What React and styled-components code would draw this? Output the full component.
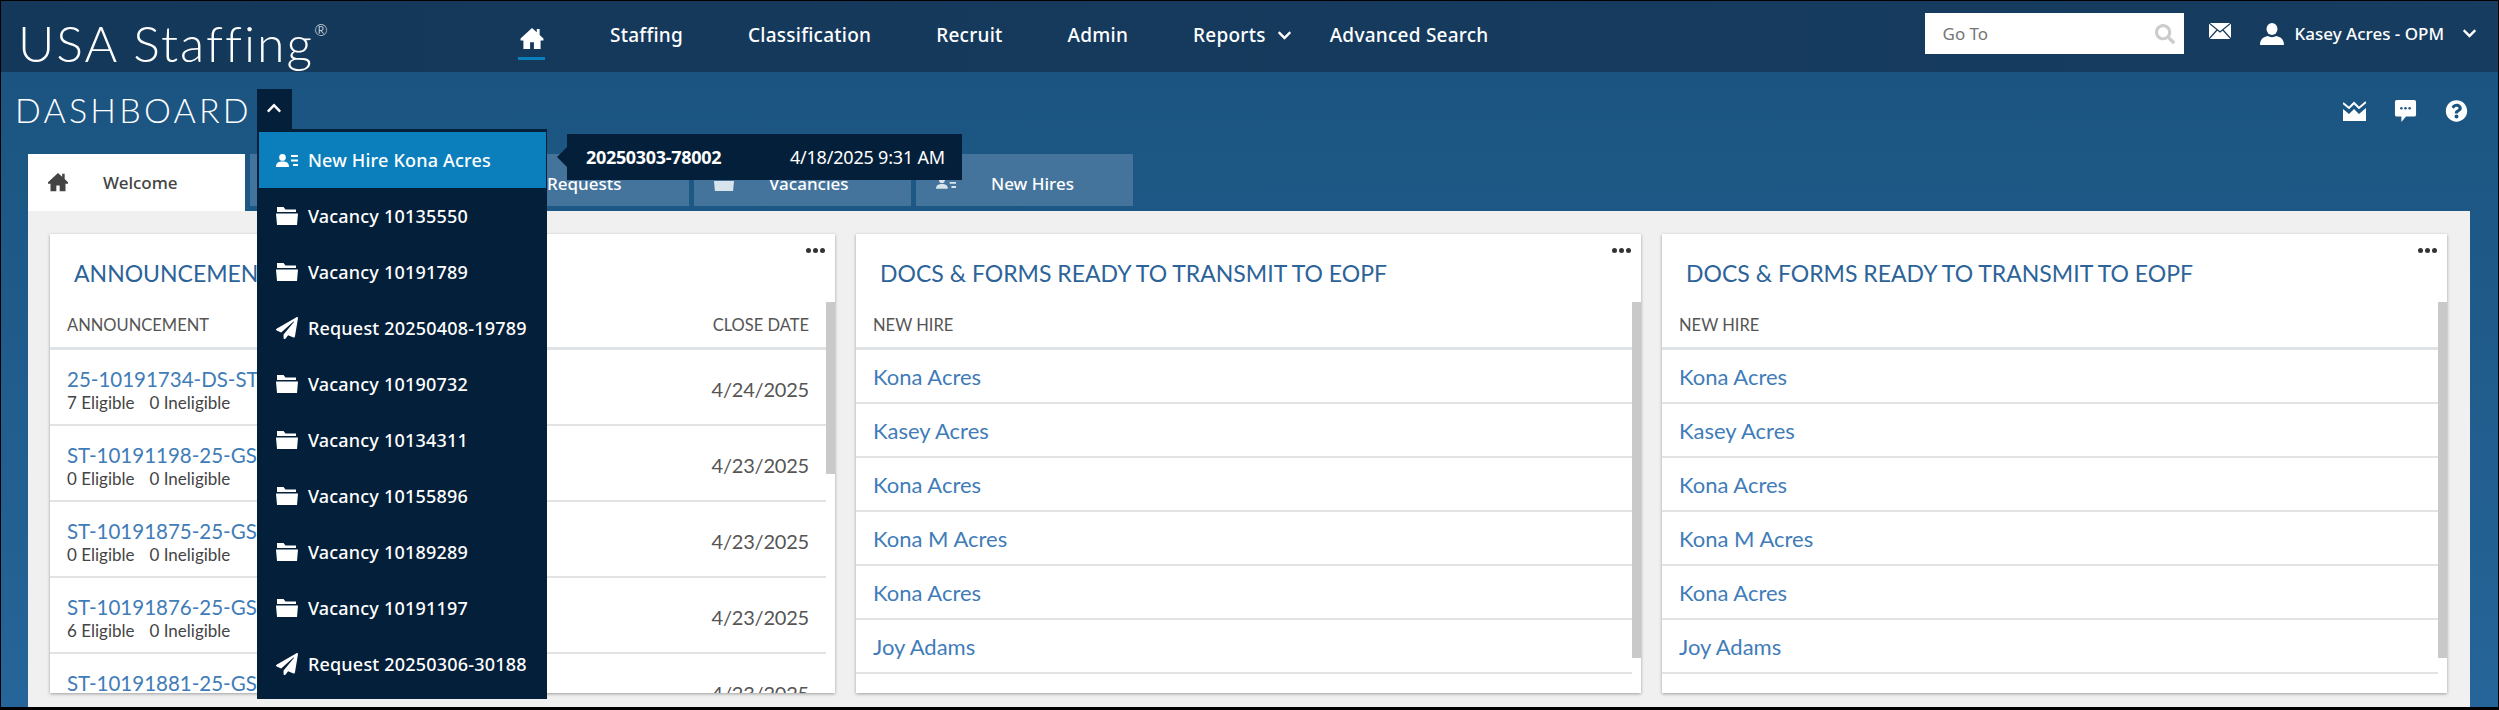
import React from "react";
import styled, { createGlobalStyle } from "styled-components";
import { FaChevronDown, FaChevronUp, FaPaperPlane, FaQuestionCircle, FaSearch } from "react-icons/fa";

const GlobalStyle = createGlobalStyle`
  html, body { margin: 0; padding: 0; background: #000; }
  * { box-sizing: border-box; }
`;

const Frame = styled.div`
  position: relative;
  width: 2499px;
  height: 710px;
  overflow: hidden;
  display: flex;
  flex-direction: column;
  padding: 1px 1px 3px 1px;
  background: #000;
  font-family: "Noto Sans", sans-serif;
`;

const Header = styled.header`
  height: 71px;
  flex: none;
  display: flex;
  align-items: flex-start;
  padding-left: 17px;
  background: linear-gradient(90deg, #14385a, #163c5f);
  color: #fff;
`;

const Logo = styled.div`
  width: 500px;
  margin-top: 12px;
  font-family: "Lato", sans-serif;
  font-weight: 300;
  font-size: 50px;
  line-height: 60px;
  letter-spacing: 2px;
  sup { font-size: 16px; line-height: 0; vertical-align: 26px; letter-spacing: 0; }
`;

const Nav = styled.nav`
  display: flex;
  align-items: flex-start;
  gap: 65px;
`;

const NavLink = styled.a`
  display: flex;
  align-items: center;
  gap: 11px;
  height: 24px;
  margin-top: 22px;
  margin-right: ${(p) => p.$tight || 0}px;
  font-size: 19px;
  font-weight: 500;
  letter-spacing: 0.25px;
  white-space: nowrap;
`;

const HomeLink = styled.a`
  width: 27px;
  height: 59px;
  padding-top: 27px;
  border-bottom: 3px solid #0a7fbc;
  display: flex;
  justify-content: center;
  svg { width: 24px; height: 21px; }
`;

const HeaderRight = styled.div`
  margin-left: auto;
  display: flex;
  align-items: flex-start;
  padding-right: 21px;
`;

const SearchBox = styled.div`
  width: 259px;
  height: 41px;
  margin-top: 12px;
  padding: 0 9px 0 18px;
  background: #fff;
  color: #757575;
  display: flex;
  align-items: center;
  justify-content: space-between;
  font-size: 17px;
  svg { color: #ccc; font-size: 20px; }
`;

const MailIcon = styled.svg`
  width: 22px;
  height: 16px;
  margin: 22px 29px 0 25px;
`;

const UserIcon = styled.svg`
  width: 24px;
  height: 22px;
  margin-top: 22px;
`;

const UserName = styled.span`
  margin: 21px 18px 0 11px;
  font-size: 17px;
  font-weight: 500;
  line-height: 24px;
  white-space: nowrap;
`;

const UserCaret = styled.span`
  margin-top: 25px;
  font-size: 15px;
  line-height: 15px;
`;

const Body = styled.main`
  flex: 1;
  min-height: 0;
  display: flex;
  flex-direction: column;
  padding: 0 28px 0 27px;
  background: linear-gradient(180deg, #1b5480, #266599);
`;

const TitleRow = styled.div`
  height: 82px;
  flex: none;
  display: flex;
  align-items: flex-start;
  margin-left: -27px;
  padding-left: 14px;
`;

const PageTitle = styled.h1`
  margin: 17px 5px 0 0;
  color: #fff;
  font-family: "Lato", sans-serif;
  font-weight: 300;
  font-size: 34px;
  line-height: 42px;
  letter-spacing: 3.2px;
`;

const Toggle = styled.div`
  position: relative;
  z-index: 5;
  width: 35px;
  height: 41px;
  margin-top: 17px;
  padding-top: 11px;
  display: flex;
  justify-content: center;
  align-items: flex-start;
  background: #041f3a;
  color: #fff;
  font-size: 16px;
`;

const Menu = styled.ul`
  position: absolute;
  top: 40px;
  left: 0;
  width: 290px;
  height: 570px;
  margin: 0;
  padding: 3px 1px 0 2px;
  list-style: none;
  background: #041f3a;
`;

const MenuItem = styled.li`
  height: 56px;
  display: flex;
  align-items: center;
  padding-left: 17px;
  gap: 10px;
  background: ${(p) => (p.$active ? "#0a7fbc" : "transparent")};
  color: #fff;
  font-size: 18px;
  font-weight: 500;
  letter-spacing: 0.2px;
  text-align: left;
  white-space: nowrap;
  svg { width: 22px; height: auto; flex: none; }
`;

const Tooltip = styled.div`
  position: absolute;
  top: 45px;
  left: 310px;
  width: 395px;
  height: 46px;
  display: flex;
  align-items: center;
  justify-content: space-between;
  padding: 0 17px 0 19px;
  background: #041f3a;
  color: #fff;
  font-size: 18px;
  white-space: nowrap;
  &::before {
    content: "";
    position: absolute;
    left: -10px;
    top: 13px;
    border-style: solid;
    border-width: 10px 10px 10px 0;
    border-color: transparent #041f3a transparent transparent;
  }
  b { font-weight: 700; letter-spacing: -0.3px; }
  span { letter-spacing: -0.2px; }
`;

const TopIcons = styled.div`
  margin-left: auto;
  display: flex;
  align-items: center;
  gap: 28px;
  margin-top: 28px;
  margin-right: 2px;
  color: #fff;
  svg { width: 23px; height: 22px; display: block; }
`;

const Tabs = styled.div`
  height: 57px;
  flex: none;
  display: flex;
  align-items: flex-start;
  gap: 5px;
`;

const Tab = styled.div`
  width: 217px;
  height: ${(p) => (p.$active ? 57 : 52)}px;
  display: flex;
  align-items: center;
  padding: ${(p) => (p.$active ? "0 0 0 20px" : "6px 0 0 20px")};
  gap: 35px;
  background: ${(p) => (p.$active ? "#fff" : "#44739b")};
  color: ${(p) => (p.$active ? "#444" : "#fff")};
  font-size: 17px;
  font-weight: 500;
  svg { width: 20px; height: auto; flex: none; opacity: ${(p) => (p.$active ? 1 : 0.8)}; }
`;

const Panel = styled.section`
  flex: 1;
  min-height: 0;
  padding: 23px 22px 14px 22px;
  background: #f0f0f0;
  display: grid;
  grid-template-columns: repeat(3, 785px);
  grid-template-rows: minmax(0, 1fr);
  gap: 21px;
`;

const Card = styled.article`
  position: relative;
  overflow: hidden;
  background: #fff;
  box-shadow: 0 1px 3px rgba(0, 0, 0, 0.35);
`;

const CardMore = styled.span`
  position: absolute;
  top: 14px;
  right: 10px;
  display: flex;
  gap: 2px;
  i { width: 5px; height: 5px; border-radius: 50%; background: #333; }
`;

const CardTitle = styled.h2`
  height: 68px;
  margin: 0;
  padding: 24px 0 0 24px;
  color: #2c6399;
  font-family: "Lato", sans-serif;
  font-weight: 400;
  font-size: 23px;
  line-height: 30px;
  white-space: nowrap;
`;

const Scroll = styled.div`
  position: absolute;
  top: 68px;
  right: 0;
  width: 9px;
  height: ${(p) => p.$size}px;
  background: #c9c9c9;
`;

const TableHead = styled.div`
  height: 48px;
  margin-right: 9px;
  padding: 0 17px 0 17px;
  display: flex;
  align-items: center;
  justify-content: space-between;
  border-bottom: 3px solid #dfe3e6;
  color: #555;
  font-family: "Lato", sans-serif;
  font-size: 16.5px;
`;

const AnnouncementRow = styled.div`
  height: 76px;
  margin-right: 9px;
  padding: 0 17px 0 17px;
  display: flex;
  align-items: center;
  justify-content: space-between;
  border-bottom: 2px solid #e3e3e3;
  font-family: "Lato", sans-serif;
`;

const RowCell = styled.div`
  margin-top: 4px;
  min-width: 0;
`;

const RowLink = styled.a`
  display: block;
  color: #3f7cb8;
  font-size: ${(p) => p.$size}px;
  line-height: 26px;
`;

const Counts = styled.div`
  display: flex;
  gap: 15px;
  margin-top: 1px;
  color: #444;
  font-size: 17px;
  line-height: 20px;
`;

const RowDate = styled.span`
  color: #555;
  font-size: 20px;
  letter-spacing: -0.2px;
  margin-top: 4px;
`;

const HireRow = styled.div`
  height: 54px;
  margin-right: 9px;
  padding: 1px 0 0 17px;
  display: flex;
  align-items: center;
  border-bottom: 2px solid #e3e3e3;
  font-family: "Lato", sans-serif;
`;

const HomeIcon = (props) => (
  <svg viewBox="0 0 24 22" fill="currentColor" {...props}>
    <path d="M12 0 L0 11 V13 H3 V22 H10 V15 H14 V22 H21 V13 H24 V11 L20 7.3 V1 H17 V4.5 Z" />
  </svg>
);

const FolderIcon = (props) => (
  <svg viewBox="0 0 22 18" fill="currentColor" {...props}>
    <path d="M1 0 H7.5 L9.5 2.5 H20 V5 H1 Z" />
    <path d="M0 6.5 H22 L21 18 H1 Z" />
  </svg>
);

const HireIcon = (props) => (
  <svg viewBox="0 0 22 13" fill="currentColor" {...props}>
    <ellipse cx="6.5" cy="3.4" rx="3.3" ry="3.4" />
    <path d="M0 13 C0 8.5 3 7.6 6.5 7.6 C10 7.6 13 8.5 13 13 Z" />
    <path d="M15 1 H22 V3 H15 Z M15 5.5 H22 V7.5 H15 Z M17 10 H22 V12 H17 Z" />
  </svg>
);

const ChartIcon = (props) => (
  <svg viewBox="0 0 23 20" fill="currentColor" {...props}>
    <path d="M0 8 L6 13 L11 8 L16 13 L23 7 V20 H0 Z" />
    <path d="M0 2 L6 7 L11 2 L16 7 L23 1" fill="none" stroke="currentColor" strokeWidth="2" />
  </svg>
);

const ChatIcon = (props) => (
  <svg viewBox="0 0 23 24" {...props}>
    <path
      fill="currentColor"
      d="M2 0 H21 A2 2 0 0 1 23 2 V16 A2 2 0 0 1 21 18 H12 L7 24 V18 H2 A2 2 0 0 1 0 16 V2 A2 2 0 0 1 2 0 Z"
    />
    <circle cx="7" cy="9" r="1.4" fill="#1c5582" />
    <circle cx="11.5" cy="9" r="1.4" fill="#1c5582" />
    <circle cx="16" cy="9" r="1.4" fill="#1c5582" />
  </svg>
);

const menuItems = [
  { kind: "hire", label: "New Hire Kona Acres", active: true },
  { kind: "folder", label: "Vacancy 10135550" },
  { kind: "folder", label: "Vacancy 10191789" },
  { kind: "plane", label: "Request 20250408-19789" },
  { kind: "folder", label: "Vacancy 10190732" },
  { kind: "folder", label: "Vacancy 10134311" },
  { kind: "folder", label: "Vacancy 10155896" },
  { kind: "folder", label: "Vacancy 10189289" },
  { kind: "folder", label: "Vacancy 10191197" },
  { kind: "plane", label: "Request 20250306-30188" },
];

const menuIcon = (kind) => {
  if (kind === "hire") return <HireIcon />;
  if (kind === "plane") return <FaPaperPlane />;
  return <FolderIcon />;
};

const announcements = [
  { id: "25-10191734-DS-ST", eligible: 7, date: "4/24/2025" },
  { id: "ST-10191198-25-GS", eligible: 0, date: "4/23/2025" },
  { id: "ST-10191875-25-GS", eligible: 0, date: "4/23/2025" },
  { id: "ST-10191876-25-GS", eligible: 6, date: "4/23/2025" },
  { id: "ST-10191881-25-GS", eligible: 0, date: "4/23/2025" },
];

const hires = ["Kona Acres", "Kasey Acres", "Kona Acres", "Kona M Acres", "Kona Acres", "Joy Adams"];

function HireCard() {
  return (
    <Card>
      <CardMore><i /><i /><i /></CardMore>
      <CardTitle>DOCS &amp; FORMS READY TO TRANSMIT TO EOPF</CardTitle>
      <Scroll $size={356} />
      <TableHead>NEW HIRE</TableHead>
      {hires.map((name, i) => (
        <HireRow key={i}>
          <RowLink $size={22}>{name}</RowLink>
        </HireRow>
      ))}
    </Card>
  );
}

export default function App() {
  return (
    <Frame>
      <GlobalStyle />
      <Header>
        <Logo>USA Staffing<sup>®</sup></Logo>
        <Nav>
          <HomeLink><HomeIcon /></HomeLink>
          <NavLink>Staffing</NavLink>
          <NavLink>Classification</NavLink>
          <NavLink>Recruit</NavLink>
          <NavLink>Admin</NavLink>
          <NavLink $tight={-27}>Reports <FaChevronDown size={15} /></NavLink>
          <NavLink>Advanced Search</NavLink>
        </Nav>
        <HeaderRight>
          <SearchBox>Go To <FaSearch /></SearchBox>
          <MailIcon viewBox="0 0 22 16">
            <rect width="22" height="16" fill="#fff" />
            <path d="M0 0 L11 9 L22 0 M0 16 L8 7 M22 16 L14 7" fill="none" stroke="#14385a" strokeWidth="1.2" />
          </MailIcon>
          <UserIcon viewBox="0 0 24 22" fill="#fff">
            <ellipse cx="12" cy="6" rx="5.5" ry="6" />
            <path d="M0 22 C0 15 5 13.5 8 13 C10 14.5 14 14.5 16 13 C19 13.5 24 15 24 22 Z" />
          </UserIcon>
          <UserName>Kasey Acres - OPM</UserName>
          <UserCaret><FaChevronDown /></UserCaret>
        </HeaderRight>
      </Header>
      <Body>
        <TitleRow>
          <PageTitle>DASHBOARD</PageTitle>
          <Toggle>
            <FaChevronUp />
            <Menu>
              {menuItems.map((item) => (
                <MenuItem key={item.label} $active={item.active}>
                  {menuIcon(item.kind)}
                  {item.label}
                </MenuItem>
              ))}
            </Menu>
            <Tooltip>
              <b>20250303-78002</b>
              <span>4/18/2025 9:31 AM</span>
            </Tooltip>
          </Toggle>
          <TopIcons>
            <ChartIcon />
            <ChatIcon />
            <FaQuestionCircle />
          </TopIcons>
        </TitleRow>
        <Tabs>
          <Tab $active><HomeIcon />Welcome</Tab>
          <Tab />
          <Tab><FaPaperPlane />Requests</Tab>
          <Tab><FolderIcon />Vacancies</Tab>
          <Tab><HireIcon />New Hires</Tab>
        </Tabs>
        <Panel>
          <Card>
            <CardMore><i /><i /><i /></CardMore>
            <CardTitle>ANNOUNCEMENTS</CardTitle>
            <Scroll $size={172} />
            <TableHead><span>ANNOUNCEMENT</span><span>CLOSE DATE</span></TableHead>
            {announcements.map((row) => (
              <AnnouncementRow key={row.id}>
                <RowCell>
                  <RowLink $size={20.5}>{row.id}</RowLink>
                  <Counts>
                    <span>{row.eligible} Eligible</span>
                    <span>0 Ineligible</span>
                  </Counts>
                </RowCell>
                <RowDate>{row.date}</RowDate>
              </AnnouncementRow>
            ))}
          </Card>
          <HireCard />
          <HireCard />
        </Panel>
      </Body>
    </Frame>
  );
}
